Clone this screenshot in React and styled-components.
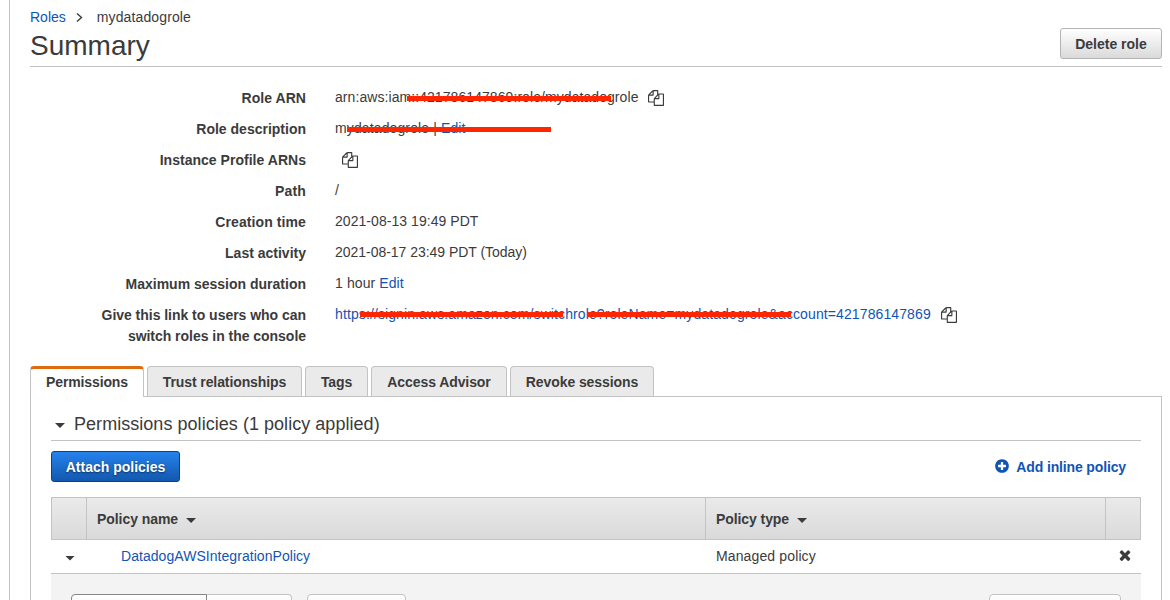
import React from 'react';
import styled, { createGlobalStyle, css } from 'styled-components';

const Global = createGlobalStyle`
  * { box-sizing: border-box; }
  html, body { margin: 0; background: #fff; overflow: hidden; }
  body {
    font-family: "Helvetica Neue", "Liberation Sans", Arial, sans-serif;
    font-size: 14px;
    line-height: 21px;
    color: #3b3b3b;
  }
`;

const tracking = css`letter-spacing: ${(p) => p.$track || 0}px;`;

const Page = styled.main`
  height: 600px;
  margin-left: 9px;
  padding: 6px 8px 0 20px;
  border-left: 1px solid #c3c3c3;
  overflow: hidden;
`;
const Breadcrumb = styled.nav`
  display: flex;
  align-items: center;
  height: 22px;
`;
const Chevron = styled.svg`
  width: 7px;
  height: 11px;
  margin: 0 14px 0 10px;
  fill: none;
  stroke: #3b3b3b;
  stroke-width: 1.4;
`;
const Link = styled.a`
  color: #1155b4;
  white-space: nowrap;
  ${tracking}
`;
const Text = styled.span`
  white-space: nowrap;
  ${tracking}
`;
const Header = styled.header`
  display: flex;
  justify-content: space-between;
  height: 39px;
  border-bottom: 1px solid #c3c3c3;
`;
const Title = styled.h1`
  margin: 0;
  font-size: 28px;
  font-weight: 400;
  line-height: 35px;
  ${tracking}
`;
const Button = styled.button`
  height: 31px;
  width: ${(p) => p.$width}px;
  padding: 1px 0 0;
  border: 1px solid ${(p) => (p.$primary ? '#0f3f80' : '#b3b3b3')};
  border-radius: 3px;
  background: ${(p) => (p.$primary
    ? 'linear-gradient(#2582ec, #1358ae)'
    : 'linear-gradient(#ffffff, #dadada)')};
  color: ${(p) => (p.$primary ? '#fff' : '#3b3b3b')};
  text-shadow: ${(p) => (p.$primary ? '0 1px 2px #08305f' : 'none')};
  font: bold 14px "Liberation Sans", Arial, sans-serif;
  ${tracking}
`;
const Details = styled.dl`
  margin: 16px 0 0;
`;
const Row = styled.div`
  display: grid;
  grid-template-columns: 276px 1fr;
  column-gap: 29px;
  padding: 5px 0;
`;
const Label = styled.dt`
  text-align: right;
  font-weight: bold;
  white-space: pre-line;
  ${tracking}
`;
const Value = styled.dd`
  display: flex;
  align-items: center;
  height: 19px;
  margin: 0;
  white-space: pre;
`;
const Struck = styled.span`
  position: relative;
  display: flex;
  align-items: center;
`;
const Strike = styled.span`
  position: absolute;
  left: ${(p) => p.$from}px;
  top: ${(p) => p.$top || 8}px;
  width: ${(p) => p.$length}px;
  height: 5px;
  background: #ff2600;
`;
const CopySvg = styled.svg`
  width: 16px;
  height: 16px;
  margin: 1px 0 0 ${(p) => p.$gap}px;
  fill: #3b3b3b;
`;
const Tabs = styled.div`
  display: flex;
  gap: 3px;
  height: 30px;
  margin-top: 14px;
`;
const Tab = styled.div`
  width: ${(p) => p.$width}px;
  height: ${(p) => (p.$active ? 31 : 30)}px;
  border: 1px solid #c3c3c3;
  border-bottom: 0;
  border-radius: 4px 4px 0 0;
  background: #eaeaea;
  text-align: center;
  font-weight: bold;
  line-height: 30px;
  z-index: 1;
  ${(p) => p.$active && css`
    background: #fff;
    border-top: 3px solid #dd6b10;
    line-height: 26px;
  `}
  ${tracking}
`;
const Panel = styled.section`
  height: 220px;
  padding: 14px 20px 0;
  border: 1px solid #c3c3c3;
  border-bottom: 0;
`;
const SectionTitle = styled.h2`
  display: flex;
  align-items: center;
  height: 30px;
  margin: 0;
  padding: 0 0 3px 4px;
  border-bottom: 1px solid #c3c3c3;
  font-size: 18px;
  font-weight: 400;
`;
const Caret = styled.span`
  flex: none;
  width: 10px;
  height: 5px;
  margin: ${(p) => p.$margin};
  background: #3b3b3b;
  clip-path: polygon(0 0, 100% 0, 50% 100%);
`;
const Actions = styled.div`
  display: flex;
  justify-content: space-between;
  padding: 10px 15px 15px 0;
`;
const AddLink = styled.div`
  display: flex;
  align-items: center;
  gap: 6px;
  padding-top: 2px;
  color: #1155b4;
  font-weight: bold;
  svg { width: 16px; height: 16px; fill: #1155b4; margin-bottom: 3px; }
`;
const tableColumns = css`
  display: grid;
  grid-template-columns: 35px 619px 400px 1fr;
`;
const TableHead = styled.div`
  ${tableColumns}
  height: 43px;
  border: 1px solid #c3c3c3;
  background: linear-gradient(#eaeaea, #dadada);
  font-weight: bold;
`;
const HeadCell = styled.div`
  display: flex;
  align-items: center;
  padding-left: 10px;
  padding-top: 2px;
  border-right: ${(p) => (p.$last ? 0 : '1px solid #c3c3c3')};
`;
const TableRow = styled.div`
  ${tableColumns}
  height: 34px;
  padding-left: 1px;
  border-bottom: 1px solid #c3c3c3;
`;
const Cell = styled.div`
  display: flex;
  align-items: center;
  padding-left: ${(p) => p.$left}px;
  svg { width: 16px; height: 16px; fill: #3b3b3b; margin-bottom: 4px; }
`;
const Expanded = styled.div`
  display: flex;
  height: 40px;
  padding: 20px 20px 0;
  background: #f3f3f3;
`;
const Control = styled.div`
  width: ${(p) => p.$width}px;
  height: 30px;
  margin-left: ${(p) => p.$gap || 0}px;
  border: 1px solid ${(p) => (p.$pressed ? '#858585' : '#c3c3c3')};
  border-radius: ${(p) => p.$corners || '4px'};
  border-left-width: ${(p) => (p.$joined ? 0 : 1)}px;
  background: linear-gradient(#fff, #e5e5e5);
`;
const Spacer = styled.div`flex: 1;`;

const CopyIcon = ({ gap = 10 }) => (
  <CopySvg $gap={gap} viewBox="0 0 1792 1792">
    <path d="M1696 384q40 0 68 28t28 68v1216q0 40-28 68t-68 28h-960q-40 0-68-28t-28-68v-288h-544q-40 0-68-28t-28-68v-672q0-40 20-88t48-76l408-408q28-28 76-48t88-20h416q40 0 68 28t28 68v328q68-40 128-40h416zm-544 213l-299 299h299v-299zm-640-384l-299 299h299v-299zm196 647l316-316v-416h-384v416q0 40-28 68t-68 28h-416v640h512v-256q0-40 20-88t48-76zm956 804v-1152h-384v416q0 40-28 68t-68 28h-416v640h896z" />
  </CopySvg>
);
const PlusIcon = () => (
  <svg viewBox="0 0 1792 1792">
    <path d="M1344 960v-128q0-26-19-45t-45-19h-256v-256q0-26-19-45t-45-19h-128q-26 0-45 19t-19 45v256h-256q-26 0-45 19t-19 45v128q0 26 19 45t45 19h256v256q0 26 19 45t45 19h128q26 0 45-19t19-45v-256h256q26 0 45-19t19-45zm320-64q0 209-103 385.5t-279.5 279.5-385.5 103-385.5-103-279.5-279.5-103-385.5 103-385.5 279.5-279.5 385.5-103 385.5 103 279.5 279.5 103 385.5z" />
  </svg>
);
const RemoveIcon = () => (
  <svg viewBox="0 0 1792 1792">
    <path d="M1490 1322q0 40-28 68l-136 136q-28 28-68 28t-68-28l-294-294-294 294q-28 28-68 28t-68-28l-136-136q-28-28-28-68t28-68l294-294-294-294q-28-28-28-68t28-68l136-136q28-28 68-28t68 28l294 294 294-294q28-28 68-28t68 28l136 136q28 28 28 68t-28 68l-294 294 294 294q28 28 28 68z" />
  </svg>
);

const tabs = [
  { name: 'Permissions', width: 114, active: true, track: -0.12 },
  { name: 'Trust relationships', width: 155, track: -0.1 },
  { name: 'Tags', width: 63, track: -0.1 },
  { name: 'Access Advisor', width: 136, track: -0.08 },
  { name: 'Revoke sessions', width: 144, track: -0.08 },
];

export default function App() {
  return (
    <>
      <Global />
      <Page>
        <Breadcrumb>
          <Link>Roles</Link>
          <Chevron viewBox="0 0 7 11"><path d="M1 1.5l4.5 4L1 9.5" /></Chevron>
          <Text $track={0.12}>mydatadogrole</Text>
        </Breadcrumb>
        <Header>
          <Title>Summary</Title>
          <Button $width={102}>Delete role</Button>
        </Header>
        <Details>
          <Row>
            <Label $track={0.06}>Role ARN</Label>
            <Value>
              <Struck>
                <Text $track={0.07}>arn:aws:iam::421786147869:role/mydatadogrole</Text>
                <Strike $from={72} $top={9} $length={204} />
              </Struck>
              <CopyIcon gap={9} />
            </Value>
          </Row>
          <Row>
            <Label>Role description</Label>
            <Value>
              <Struck>
                <Text $track={0.12}>mydatadogrole | <Link $track={0.1}>Edit</Link></Text>
                <Strike $from={12} $top={9} $length={204} />
              </Struck>
            </Value>
          </Row>
          <Row>
            <Label $track={0.03}>Instance Profile ARNs</Label>
            <Value><CopyIcon gap={7} /></Value>
          </Row>
          <Row><Label $track={0.15}>Path</Label><Value>/</Value></Row>
          <Row>
            <Label $track={0.09}>Creation time</Label>
            <Value><Text $track={0.05}>2021-08-13 19:49 PDT</Text></Value>
          </Row>
          <Row>
            <Label>Last activity</Label>
            <Value><Text $track={-0.03}>2021-08-17 23:49 PDT (Today)</Text></Value>
          </Row>
          <Row>
            <Label>Maximum session duration</Label>
            <Value><Text $track={0.1}>1 hour <Link $track={0.1}>Edit</Link></Text></Value>
          </Row>
          <Row>
            <Label $track={-0.03}>{'Give this link to users who can\nswitch roles in the console'}</Label>
            <Value>
              <Struck>
                <Link $track={0.107}>https://signin.aws.amazon.com/switchrole?roleName=mydatadogrole&amp;account=421786147869</Link>
                <Strike $from={25} $length={203} />
                <Strike $from={252} $length={204} />
              </Struck>
              <CopyIcon />
            </Value>
          </Row>
        </Details>
        <Tabs>
          {tabs.map((t) => (
            <Tab key={t.name} $width={t.width} $active={t.active} $track={t.track}>{t.name}</Tab>
          ))}
        </Tabs>
        <Panel>
          <SectionTitle>
            <Caret $margin="3px 9px 0 0" />
            <Text $track={0.04}>Permissions policies (1 policy applied)</Text>
          </SectionTitle>
          <Actions>
            <Button $primary $width={129}>Attach policies</Button>
            <AddLink><PlusIcon /><Text $track={-0.14}>Add inline policy</Text></AddLink>
          </Actions>
          <TableHead>
            <HeadCell />
            <HeadCell><Text $track={-0.06}>Policy name</Text><Caret $margin="2px 0 0 8px" /></HeadCell>
            <HeadCell><Text $track={-0.08}>Policy type</Text><Caret $margin="2px 0 0 8px" /></HeadCell>
            <HeadCell $last />
          </TableHead>
          <TableRow>
            <Cell $left={13}><Caret $margin="3px 0 0" /></Cell>
            <Cell $left={34}><Link $track={0.05}>DatadogAWSIntegrationPolicy</Link></Cell>
            <Cell $left={10}><Text $track={0.13}>Managed policy</Text></Cell>
            <Cell $left={11}><RemoveIcon /></Cell>
          </TableRow>
          <Expanded>
            <Control $width={136} $pressed $corners="4px 0 0 4px" />
            <Control $width={85} $joined $corners="0 4px 4px 0" />
            <Control $width={99} $gap={15} />
            <Spacer />
            <Control $width={132} />
          </Expanded>
        </Panel>
      </Page>
    </>
  );
}
